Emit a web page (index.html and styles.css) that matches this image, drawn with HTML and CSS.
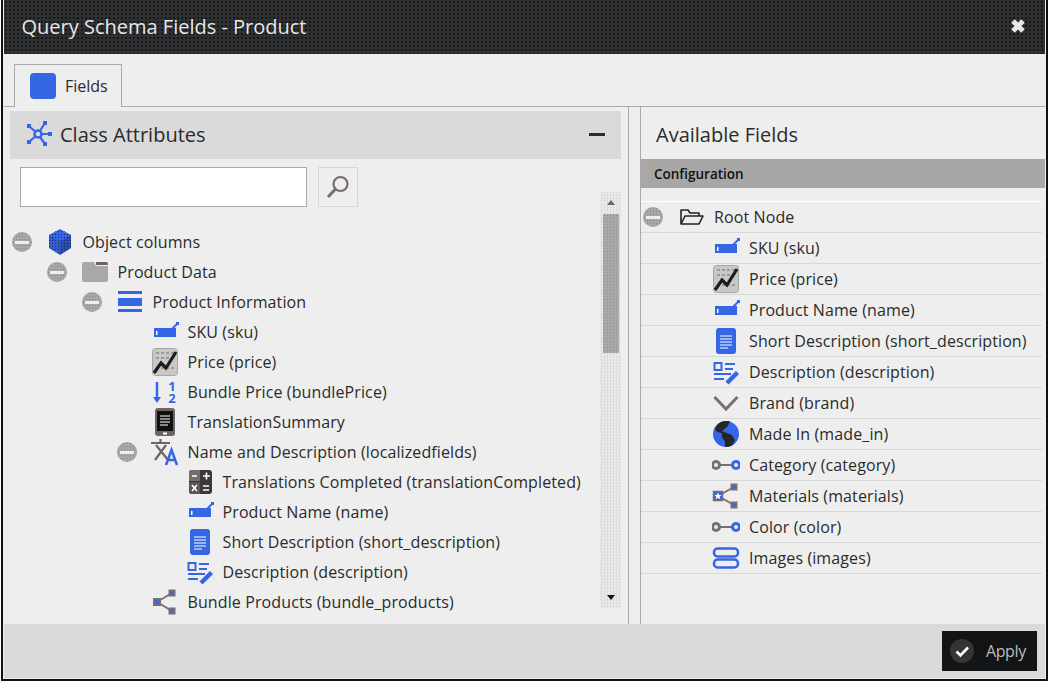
FILE: index.html
```html
<!DOCTYPE html>
<html>

<head>
	<title>Query Schema Fields - Product</title>
	<link rel="stylesheet" href="styles.css">
</head>

<body>

	<!--ICON SPRITE-->
	<svg class="sprite" xmlns="http://www.w3.org/2000/svg">
		<defs>
			<pattern id="dots" width="3" height="3" patternUnits="userSpaceOnUse">
				<rect width="1" height="1" fill="#1d2a55" />
			</pattern>
		</defs>
		<symbol id="i-cube" viewBox="0 0 28 28">
			<path d="M14 1 25 7V20L14 27 3 20V7Z" fill="#3566e6" />
			<path d="M14 1 25 7V20L14 27 3 20V7Z" fill="url(#dots)" />
			<path d="M14 14 25 7V20L14 27Z" fill="#1d2a55" opacity=".4" />
			<path d="M3 7V20L14 27V14Z" fill="#1d2a55" opacity=".12" />
		</symbol>
		<symbol id="i-folder" viewBox="0 0 28 28">
			<path d="M1 6Q1 4 3 4H13L15 8H27V22Q27 24 25 24H3Q1 24 1 22Z" fill="#aaa8a5" />
			<path d="M15 4H25Q27 4 27 6V7H15Z" fill="#6e6464" />
		</symbol>
		<symbol id="i-block" viewBox="0 0 28 28">
			<path d="M2 3H26V6H2ZM2 10H26V18H2ZM2 21H26V24H2Z" fill="#3566e6" />
		</symbol>
		<symbol id="i-input" viewBox="0 0 28 28">
			<path d="M3 10H25V19H3Z" fill="#3566e6" />
			<path d="M21 11 26 6" stroke="#3566e6" stroke-width="2" />
			<rect x="25" y="4" width="3" height="3" fill="#3566e6" />
			<rect x="5" y="13" width="1.5" height="4" fill="#fff" />
		</symbol>
		<symbol id="i-price" viewBox="0 0 28 28">
			<rect x="1.5" y="0.5" width="25" height="27" rx="3" fill="#c9c8c6" stroke="#a8a7a5" />
			<path d="M5 5H23M5 10H23M5 20H23" stroke="#9b9a98" stroke-width="2" stroke-dasharray="3 2" />
			<path d="M3 25 10 15 15 20 25 4" fill="none" stroke="#1c1c1c" stroke-width="3.200" />
		</symbol>
		<symbol id="i-tablet" viewBox="0 0 28 28">
			<rect x="4" y="0" width="20" height="28" rx="3" fill="#6e6464" />
			<rect x="6" y="3" width="16" height="20" fill="#111" />
			<path d="M9 8H19M9 11H19M9 14H19M9 17H17" stroke="#fff" />
			<rect x="12" y="24.500" width="4" height="2" fill="#fff" />
		</symbol>
		<symbol id="i-translate" viewBox="0 0 28 28">
			<path d="M0 5H19M9.500 1V5M5 7 17 22M15 7 4 22" fill="none" stroke="#6e6464" stroke-width="2.200" />
			<path d="M15 27 20.500 12 26 27M17 22H24" fill="none" stroke="#3566e6" stroke-width="2.500" />
		</symbol>
		<symbol id="i-calc" viewBox="0 0 28 28">
			<rect x="3" y="2" width="23" height="24" rx="3" fill="#3a3838" />
			<path d="M3 5Q3 2 6 2H14V13H3Z" fill="#776c6c" />
			<path d="M3 14H14V26H6Q3 26 3 23Z" fill="#5a5656" />
			<path d="M6 8H11M17 8H24M20.500 4.500V11.500M6 17 11 23M11 17 6 23M17 18H23M17 22H23" stroke="#fff" stroke-width="1.600" />
		</symbol>
		<symbol id="i-doc" viewBox="0 0 28 28">
			<rect x="4" y="1" width="20" height="26" rx="3" fill="#3566e6" />
			<path d="M8 9H20M8 12H20M8 15H20M8 18H20M8 21H16" stroke="#fff" />
		</symbol>
		<symbol id="i-desc" viewBox="0 0 28 28">
			<rect x="2.500" y="5" width="7" height="7" fill="none" stroke="#3566e6" stroke-width="2" />
			<path d="M13 6H23M13 11H21M2 16H19M2 21H12" stroke="#3566e6" stroke-width="2" />
			<path d="M15 25 25.500 14.500" stroke="#3566e6" stroke-width="4.500" />
		</symbol>
		<symbol id="i-share" viewBox="0 0 28 28">
			<path d="M6 14 21 5M6 14 21 23" stroke="#7a6e6e" stroke-width="2" />
			<rect x="3" y="11" width="6" height="6" fill="#3566e6" stroke="#7a6e6e" stroke-width="2" />
			<rect x="18.500" y="2.500" width="5" height="5" fill="#3566e6" stroke="#7a6e6e" stroke-width="2" />
			<rect x="18.500" y="20.500" width="5" height="5" fill="#3566e6" stroke="#7a6e6e" stroke-width="2" />
		</symbol>
		<symbol id="i-materials" viewBox="0 0 28 28">
			<path d="M6 14 22 5M6 14 22 23" stroke="#7a6e6e" stroke-width="2" />
			<rect x="1.500" y="9.500" width="9" height="9" fill="#3566e6" stroke="#7a6e6e" stroke-width="1.500" />
			<path d="M6 10.500 7.100 13H9.500L7.600 14.800 8.200 17.300 6 16 3.800 17.300 4.400 14.800 2.500 13H4.900Z" fill="#fff" />
			<rect x="19.500" y="2.500" width="5" height="5" fill="#3566e6" stroke="#7a6e6e" stroke-width="2" />
			<rect x="19.500" y="20.500" width="5" height="5" fill="#3566e6" stroke="#7a6e6e" stroke-width="2" />
		</symbol>
		<symbol id="i-chevron" viewBox="0 0 28 28">
			<path d="M2.500 8 14 20 25.500 8" fill="none" stroke="#7a6e6e" stroke-width="3" />
		</symbol>
		<symbol id="i-globe" viewBox="0 0 28 28">
			<circle cx="14" cy="14" r="13" fill="#3566e6" />
			<path d="M3 9Q5 4 9 2 13 0.500 18 1.300L15.300 6.700 9.700 11 19.700 15 23 20 19.700 25.700Q16 27.200 13 26.900V21.700L9.700 16.700V13L5 12Z" fill="#262626" />
		</symbol>
		<symbol id="i-link" viewBox="0 0 28 28">
			<path d="M8 14H20" stroke="#7a6e6e" stroke-width="2" />
			<circle cx="4" cy="14" r="3.500" fill="none" stroke="#7a6e6e" stroke-width="3" />
			<circle cx="24" cy="14" r="3.500" fill="none" stroke="#3566e6" stroke-width="3" />
		</symbol>
		<symbol id="i-images" viewBox="0 0 28 28">
			<rect x="2" y="4.500" width="24" height="8" rx="3.500" fill="none" stroke="#3566e6" stroke-width="2.500" />
			<rect x="2" y="15.500" width="24" height="8" rx="3.500" fill="none" stroke="#3566e6" stroke-width="2.500" />
		</symbol>
		<symbol id="i-open" viewBox="0 0 28 28">
			<path d="M4 21V7H11L13 10H22V13M4 21 8 13H26L22 21Z" fill="none" stroke="#222" stroke-width="1.600" stroke-linejoin="round" />
		</symbol>
	</svg>

	<div class="window">

		<!--TITLE BAR-->
		<div class="titlebar">
			<span class="titlebar-text">Query Schema Fields - Product</span>
			<svg class="close-icon" viewBox="0 0 18 18">
				<path d="M4 4 14 14M14 4 4 14" stroke="#e6e6e6" stroke-width="5" />
			</svg>
		</div>

		<!--TABS-->
		<div class="tabs">
			<div class="tab">
				<span class="tab-icon"></span>
				<span>Fields</span>
			</div>
		</div>

		<div class="main">

			<!--LEFT PANEL-->
			<div class="left">
				<div class="panel-head">
					<svg class="panel-icon" viewBox="0 0 26 26">
						<path d="M12 13 3 5M12 13 19 2M12 13H24M12 13 19 23M12 13 3 21" stroke="#3566e6" stroke-width="2.200" />
						<circle cx="12" cy="13" r="3.500" fill="#dadada" stroke="#3566e6" stroke-width="2.500" />
						<rect x="1" y="3" width="4" height="4" fill="#3566e6" />
						<rect x="17" y="0" width="4" height="4" fill="#3566e6" />
						<rect x="22" y="11" width="4" height="4" fill="#3566e6" />
						<rect x="17" y="21" width="4" height="4" fill="#3566e6" />
						<rect x="1" y="19" width="4" height="4" fill="#3566e6" />
					</svg>
					<span class="panel-title">Class Attributes</span>
					<span class="collapse-bar"></span>
				</div>

				<div class="search-row">
					<input class="search-input" type="text">
					<button class="search-btn">
						<svg viewBox="0 0 26 26">
							<circle cx="15.500" cy="10" r="7" fill="none" stroke="#7a6e6e" stroke-width="2.200" />
							<path d="M10.500 15 3 23" stroke="#7a6e6e" stroke-width="3" />
						</svg>
					</button>
				</div>

				<ul class="tree">
					<li>
						<div class="row"><span class="toggle"></span><svg class="icon"><use href="#i-cube" /></svg><span>Object columns</span></div>
						<ul>
							<li>
								<div class="row"><span class="toggle"></span><svg class="icon"><use href="#i-folder" /></svg><span>Product Data</span></div>
								<ul>
									<li>
										<div class="row"><span class="toggle"></span><svg class="icon"><use href="#i-block" /></svg><span>Product Information</span></div>
										<ul>
											<li><div class="row"><span class="no-toggle"></span><svg class="icon"><use href="#i-input" /></svg><span>SKU (sku)</span></div></li>
											<li><div class="row"><span class="no-toggle"></span><svg class="icon"><use href="#i-price" /></svg><span>Price (price)</span></div></li>
											<li>
												<div class="row"><span class="no-toggle"></span>
													<svg class="icon" viewBox="0 0 28 28">
														<path d="M6 4V21" stroke="#3566e6" stroke-width="2.500" />
														<path d="M2 19H10L6 25Z" fill="#3566e6" />
														<text x="21" y="13" class="sort-num">1</text>
														<text x="21" y="25" class="sort-num">2</text>
													</svg>
													<span>Bundle Price (bundlePrice)</span>
												</div>
											</li>
											<li><div class="row"><span class="no-toggle"></span><svg class="icon"><use href="#i-tablet" /></svg><span>TranslationSummary</span></div></li>
											<li>
												<div class="row"><span class="toggle"></span><svg class="icon"><use href="#i-translate" /></svg><span>Name and Description (localizedfields)</span></div>
												<ul>
													<li><div class="row"><span class="no-toggle"></span><svg class="icon"><use href="#i-calc" /></svg><span>Translations Completed (translationCompleted)</span></div></li>
													<li><div class="row"><span class="no-toggle"></span><svg class="icon"><use href="#i-input" /></svg><span>Product Name (name)</span></div></li>
													<li><div class="row"><span class="no-toggle"></span><svg class="icon"><use href="#i-doc" /></svg><span>Short Description (short_description)</span></div></li>
													<li><div class="row"><span class="no-toggle"></span><svg class="icon"><use href="#i-desc" /></svg><span>Description (description)</span></div></li>
												</ul>
											</li>
											<li><div class="row"><span class="no-toggle"></span><svg class="icon"><use href="#i-share" /></svg><span>Bundle Products (bundle_products)</span></div></li>
										</ul>
									</li>
								</ul>
							</li>
						</ul>
					</li>
				</ul>

				<div class="scrollbar">
					<span class="arrow-up"></span>
					<span class="thumb"></span>
					<span class="arrow-down"></span>
				</div>
			</div>

			<div class="splitter"></div>

			<!--RIGHT PANEL-->
			<div class="right">
				<div class="right-title">Available Fields</div>
				<div class="config-bar">Configuration</div>
				<ul class="field-list">
					<li class="field root"><span class="toggle"></span><svg class="icon"><use href="#i-open" /></svg><span>Root Node</span></li>
					<li class="field"><svg class="icon"><use href="#i-input" /></svg><span>SKU (sku)</span></li>
					<li class="field"><svg class="icon"><use href="#i-price" /></svg><span>Price (price)</span></li>
					<li class="field"><svg class="icon"><use href="#i-input" /></svg><span>Product Name (name)</span></li>
					<li class="field"><svg class="icon"><use href="#i-doc" /></svg><span>Short Description (short_description)</span></li>
					<li class="field"><svg class="icon"><use href="#i-desc" /></svg><span>Description (description)</span></li>
					<li class="field"><svg class="icon"><use href="#i-chevron" /></svg><span>Brand (brand)</span></li>
					<li class="field"><svg class="icon"><use href="#i-globe" /></svg><span>Made In (made_in)</span></li>
					<li class="field"><svg class="icon"><use href="#i-link" /></svg><span>Category (category)</span></li>
					<li class="field"><svg class="icon"><use href="#i-materials" /></svg><span>Materials (materials)</span></li>
					<li class="field"><svg class="icon"><use href="#i-link" /></svg><span>Color (color)</span></li>
					<li class="field"><svg class="icon"><use href="#i-images" /></svg><span>Images (images)</span></li>
				</ul>
			</div>
		</div>

		<!--FOOTER-->
		<div class="footer">
			<button class="apply-btn">
				<span class="apply-check">
					<svg viewBox="0 0 24 24">
						<path d="M6.500 12.500 10.500 16.500 18 8.500" fill="none" stroke="#fff" stroke-width="2.600" />
					</svg>
				</span>
				<span>Apply</span>
			</button>
		</div>
	</div>
</body>

</html>
```

FILE: styles.css
```css
* {
	box-sizing: border-box;
}

html,
body {
	height: 100%;
}

body {
	margin: 0;
	background-color: #fff;
	font-family: "Open Sans", "Liberation Sans", sans-serif;
	font-size: 16px;
	color: #2b2b2b;
	overflow: hidden;
}

ul {
	list-style: none;
	margin: 0;
	padding: 0;
}

.sprite {
	position: absolute;
	width: 0;
	height: 0;
}

.sort-num {
	font-family: "Open Sans", sans-serif;
	font-size: 13px;
	font-weight: 700;
	text-anchor: middle;
	fill: #3566e6;
}

.window {
	display: flex;
	flex-direction: column;
	height: 681px;
	margin: 0 1px;
	padding: 0 1px 1px;
	border: 2px solid #111;
	border-top: 0;
	background-color: #eee;
}

/* title bar */
.titlebar {
	display: flex;
	align-items: center;
	justify-content: space-between;
	flex: none;
	height: 54px;
	padding: 0 18px 2px 17.500px;
	background: radial-gradient(circle, #17181a 0.8px, transparent 1.2px) 0 0/4px 4px, #2f3032;
	color: #e8e6e6;
	font-size: 20px;
}

.close-icon {
	width: 18px;
	height: 18px;
}

/* tabs */
.tabs {
	flex: none;
	height: 53px;
	padding: 10px 0 0 10px;
	border-bottom: 1px solid #aaa;
}

.tab {
	display: flex;
	align-items: center;
	gap: 9px;
	width: 108px;
	height: 43px;
	padding-left: 15px;
	border: 1px solid #aaa;
	border-bottom: 0;
	background-color: #eee;
}

.tab-icon {
	width: 26px;
	height: 26px;
	border-radius: 4px;
	background-color: #3566e6;
}

/* panels */
.main {
	display: flex;
	flex: 1;
	min-height: 0;
}

.left {
	position: relative;
	width: 625px;
	padding: 4px 7px 0 6px;
	border-right: 1px solid #aaa;
	overflow: hidden;
}

.splitter {
	width: 12px;
	border-right: 1px solid #aaa;
}

.right {
	flex: 1;
	min-width: 0;
}

.panel-head {
	display: flex;
	align-items: center;
	height: 48px;
	padding: 0 16px 2px;
	background-color: #dadada;
}

.panel-icon {
	width: 26px;
	height: 26px;
	margin-right: 8px;
}

.panel-title {
	flex: 1;
	font-size: 20px;
}

.collapse-bar {
	width: 16px;
	height: 3px;
	background-color: #2b2b2b;
}

.search-row {
	display: flex;
	gap: 11px;
	padding: 8px 10px 0;
}

.search-input {
	width: 287px;
	height: 40px;
	border: 1px solid #aaa;
	background-color: #fff;
}

.search-btn {
	display: flex;
	align-items: center;
	justify-content: center;
	width: 40px;
	height: 40px;
	padding: 0;
	border: 1px solid #d6d6d6;
	background-color: #eee;
}

.search-btn svg {
	width: 26px;
	height: 26px;
}

/* tree */
.tree {
	padding: 20px 0 0 2px;
}

.tree ul {
	padding-left: 35px;
}

.row {
	display: flex;
	align-items: center;
	height: 30px;
	letter-spacing: 0.11px;
	white-space: nowrap;
}

.toggle,
.no-toggle {
	flex: none;
	width: 20px;
	height: 20px;
}

.toggle {
	position: relative;
	border-radius: 50%;
	background: radial-gradient(circle, #8a8886 0.6px, transparent 1px) 0 0/3px 3px, #a8a7a5;
}

.toggle::after {
	content: "";
	position: absolute;
	top: 8.500px;
	left: 3px;
	width: 14px;
	height: 3px;
	background-color: #eee;
}

.icon {
	flex: none;
	width: 28px;
	height: 28px;
	margin: 0 8.500px 0 14px;
}

/* scrollbar */
.scrollbar {
	position: absolute;
	top: 85px;
	left: 596px;
	display: flex;
	flex-direction: column;
	align-items: center;
	width: 21px;
	height: 416px;
	background: repeating-conic-gradient(#dcdcdc 0 25%, #eee 0 50%) 0 0/3px 3px;
}

.arrow-up,
.arrow-down {
	flex: none;
	width: 0;
	height: 0;
	border-left: 4.500px solid transparent;
	border-right: 4.500px solid transparent;
}

.arrow-up {
	margin: 8px 0 9px;
	border-bottom: 5px solid #6e6464;
}

.arrow-down {
	margin-top: auto;
	margin-bottom: 8px;
	border-top: 5px solid #111;
}

.thumb {
	width: 16px;
	height: 139px;
	background: radial-gradient(circle, #8d8d8d 0.6px, transparent 1px) 0 0/3px 3px, #a9a9a9;
}

/* right panel */
.right-title {
	display: flex;
	align-items: center;
	height: 52px;
	padding: 2px 0 0 15px;
	font-size: 20px;
}

.config-bar {
	display: flex;
	align-items: center;
	height: 29px;
	padding-left: 13px;
	background-color: #a8a7a5;
	color: #111;
	font-size: 13.500px;
	font-weight: 600;
}

.field-list {
	margin: 13px 3px 0 0;
	border-top: 1px solid #fff;
}

.field {
	display: flex;
	align-items: center;
	height: 31px;
	padding-left: 71px;
	border-bottom: 1px solid #d8d8d8;
	letter-spacing: 0.11px;
	white-space: nowrap;
}

.field .icon {
	margin: 0 9px 0 0;
}

.field.root {
	padding-left: 2px;
}

.field.root .icon {
	margin: 0 9px 0 14px;
}

/* footer */
.footer {
	display: flex;
	align-items: center;
	justify-content: flex-end;
	flex: none;
	height: 54px;
	padding: 0 8px 0 0;
	background-color: #dadada;
}

.apply-btn {
	display: flex;
	align-items: center;
	gap: 12px;
	width: 95px;
	height: 40px;
	padding: 0 0 0 8px;
	border: 0;
	background-color: #121415;
	color: #bdbdbd;
	font-family: inherit;
	font-size: 16px;
	letter-spacing: -0.4px;
}

.apply-check {
	display: flex;
	width: 24px;
	height: 24px;
	border-radius: 50%;
	background-color: #333537;
}
```
